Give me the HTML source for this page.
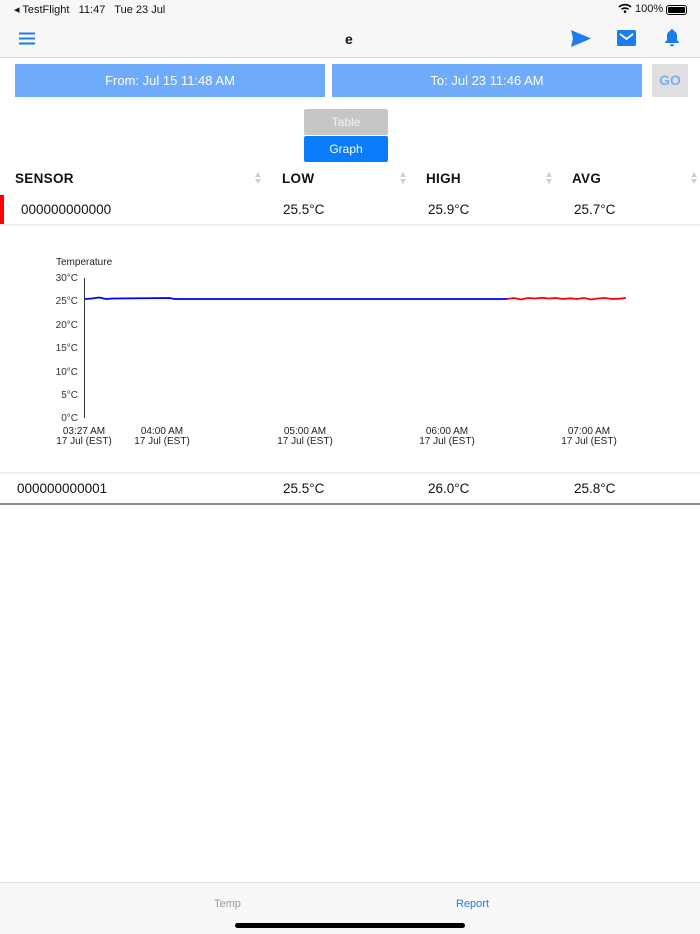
<!DOCTYPE html>
<html><head><style>
*{margin:0;padding:0;box-sizing:border-box}
body{width:700px;height:934px;background:#fff;font-family:"Liberation Sans",sans-serif;position:relative;overflow:hidden;color:#111}
.a{position:absolute}
.nav{left:0;top:0;width:700px;height:58px;background:#f7f7f7;border-bottom:1px solid #d8d8d8}
.btn{background:#6eabfb;color:#fff;font-size:13px;text-align:center;line-height:33px;height:33px;top:64px}
.th{top:171px;font-size:13.5px;font-weight:bold;letter-spacing:.3px}
.td{font-size:13.5px}
.sort{width:6px;height:12px}
.yl{font-size:10px;color:#333;right:622px;text-align:right}
.xl{font-size:10px;color:#222;text-align:center;width:80px;line-height:10px}
</style></head><body>
<div class="a nav"></div>
<div class="a" style="left:14px;top:3px;font-size:11px">◂ TestFlight&nbsp;&nbsp; 11:47&nbsp;&nbsp; Tue 23 Jul</div>
<div class="a" style="left:618px;top:3px;font-size:11px">
<svg width="14" height="10" viewBox="0 0 14 10" style="vertical-align:-1px"><path d="M1 4a9 9 0 0 1 12 0M3.5 6.3a5.5 5.5 0 0 1 7 0" stroke="#000" stroke-width="1.6" fill="none"/><circle cx="7" cy="8.6" r="1.3"/></svg> 100%</div>
<div class="a" style="left:666px;top:5px;width:21px;height:10px;border:1px solid #000;border-radius:3px;padding:1px"><div style="background:#000;width:100%;height:100%;border-radius:1px"></div></div>
<svg class="a" style="left:19px;top:32px" width="17" height="13"><path d="M0 1.5h16M0 6.5h16M0 11.5h16" stroke="#1a7cf0" stroke-width="2"/></svg>
<div class="a" style="left:345px;top:31px;font-size:14px;font-weight:bold">e</div>
<svg class="a" style="left:571px;top:30px" width="20" height="17"><path d="M0 0L20 8.5L0 17L2 8.5Z" fill="#1a7cf0"/></svg>
<svg class="a" style="left:617px;top:30px" width="19" height="16"><rect width="19" height="16" rx="1.5" fill="#1a7cf0"/><path d="M3 4l6.5 5 6.5-5" stroke="#fff" stroke-width="1.8" fill="none"/></svg>
<svg class="a" style="left:664px;top:28px" width="16" height="19"><path d="M8 1a1.3 1.3 0 0 1 1.3 1.5A5 5 0 0 1 13 7.5V12l2 2.3V15H1v-.7L3 12V7.5A5 5 0 0 1 6.7 2.5 1.3 1.3 0 0 1 8 1Z" fill="#1a7cf0"/><path d="M6 16.3h4a2 2 0 0 1-4 0Z" fill="#1a7cf0"/></svg>
<div class="a btn" style="left:15px;width:310px">From: Jul 15 11:48 AM</div>
<div class="a btn" style="left:332px;width:310px">To: Jul 23 11:46 AM</div>
<div class="a" style="left:652px;top:64px;width:36px;height:33px;background:#e0e0e0;color:#79aef5;font-weight:bold;font-size:14px;text-align:center;line-height:33px">GO</div>
<div class="a" style="left:304px;top:109px;width:84px;height:26px;background:#c6c6c6;color:#f4f4f4;font-size:12px;text-align:center;line-height:26px;border-radius:2px">Table</div>
<div class="a" style="left:304px;top:136px;width:84px;height:26px;background:#0a7cf9;color:#fff;font-size:12px;text-align:center;line-height:26px;border-radius:2px">Graph</div>
<div class="a th" style="left:15px">SENSOR</div>
<div class="a th" style="left:282px">LOW</div>
<div class="a th" style="left:426px">HIGH</div>
<div class="a th" style="left:572px">AVG</div>
<svg class="a sort" style="left:255px;top:172px" viewBox="0 0 6 12"><path d="M0 5L3 0L6 5ZM0 7L3 12L6 7Z" fill="#d0d0d0"/></svg>
<svg class="a sort" style="left:400px;top:172px" viewBox="0 0 6 12"><path d="M0 5L3 0L6 5ZM0 7L3 12L6 7Z" fill="#d0d0d0"/></svg>
<svg class="a sort" style="left:546px;top:172px" viewBox="0 0 6 12"><path d="M0 5L3 0L6 5ZM0 7L3 12L6 7Z" fill="#d0d0d0"/></svg>
<svg class="a sort" style="left:691px;top:172px" viewBox="0 0 6 12"><path d="M0 5L3 0L6 5ZM0 7L3 12L6 7Z" fill="#d0d0d0"/></svg>
<div class="a" style="left:0;top:195px;width:4px;height:30px;background:#f00"></div>
<div class="a td" style="left:21px;top:202px">000000000000</div>
<div class="a td" style="left:283px;top:202px">25.5°C</div>
<div class="a td" style="left:428px;top:202px">25.9°C</div>
<div class="a td" style="left:574px;top:202px">25.7°C</div>
<div class="a" style="left:0;top:224px;width:700px;height:2px;background:#ececec"></div>
<div class="a" style="left:56px;top:257px;font-size:10px;color:#222">Temperature</div>
<div class="a yl" style="top:273px">30°C</div>
<div class="a yl" style="top:296px">25°C</div>
<div class="a yl" style="top:320px">20°C</div>
<div class="a yl" style="top:343px">15°C</div>
<div class="a yl" style="top:367px">10°C</div>
<div class="a yl" style="top:390px">5°C</div>
<div class="a yl" style="top:413px">0°C</div>
<svg class="a" style="left:0;top:0" width="700" height="470">
<path d="M84.5 278V418" stroke="#333" stroke-width="1"/>
<path d="M85 299L92 298.5L99 297.5L106 299L113 298.5L170 298L174 299L507 299" stroke="#00f" stroke-width="1.8" fill="none"/>
<path d="M507 299L514 298L521 299.5L528 298L535 298.5L542 297.8L549 298.5L556 298L563 299L570 298.3L577 299L584 298L591 299.5L598 298.5L605 298L612 299L619 298.7L626 298" stroke="#f00" stroke-width="1.8" fill="none"/>
</svg>
<div class="a xl" style="left:44px;top:427px">03:27 AM<br>17 Jul (EST)</div>
<div class="a xl" style="left:122px;top:427px">04:00 AM<br>17 Jul (EST)</div>
<div class="a xl" style="left:265px;top:427px">05:00 AM<br>17 Jul (EST)</div>
<div class="a xl" style="left:407px;top:427px">06:00 AM<br>17 Jul (EST)</div>
<div class="a xl" style="left:549px;top:427px">07:00 AM<br>17 Jul (EST)</div>
<div class="a" style="left:0;top:472px;width:700px;height:2px;background:#ececec"></div>
<div class="a td" style="left:17px;top:481px">000000000001</div>
<div class="a td" style="left:283px;top:481px">25.5°C</div>
<div class="a td" style="left:428px;top:481px">26.0°C</div>
<div class="a td" style="left:574px;top:481px">25.8°C</div>
<div class="a" style="left:0;top:503px;width:700px;height:2px;background:#8a8a8a"></div>
<div class="a" style="left:0;top:882px;width:700px;height:52px;background:#f8f8f8;border-top:1px solid #dcdcdc"></div>
<div class="a" style="left:214px;top:898px;font-size:11px;color:#999">Temp</div>
<div class="a" style="left:456px;top:898px;font-size:11px;color:#1a7cf0">Report</div>
<div class="a" style="left:235px;top:923px;width:230px;height:5px;background:#000;border-radius:3px"></div>
</body></html>
